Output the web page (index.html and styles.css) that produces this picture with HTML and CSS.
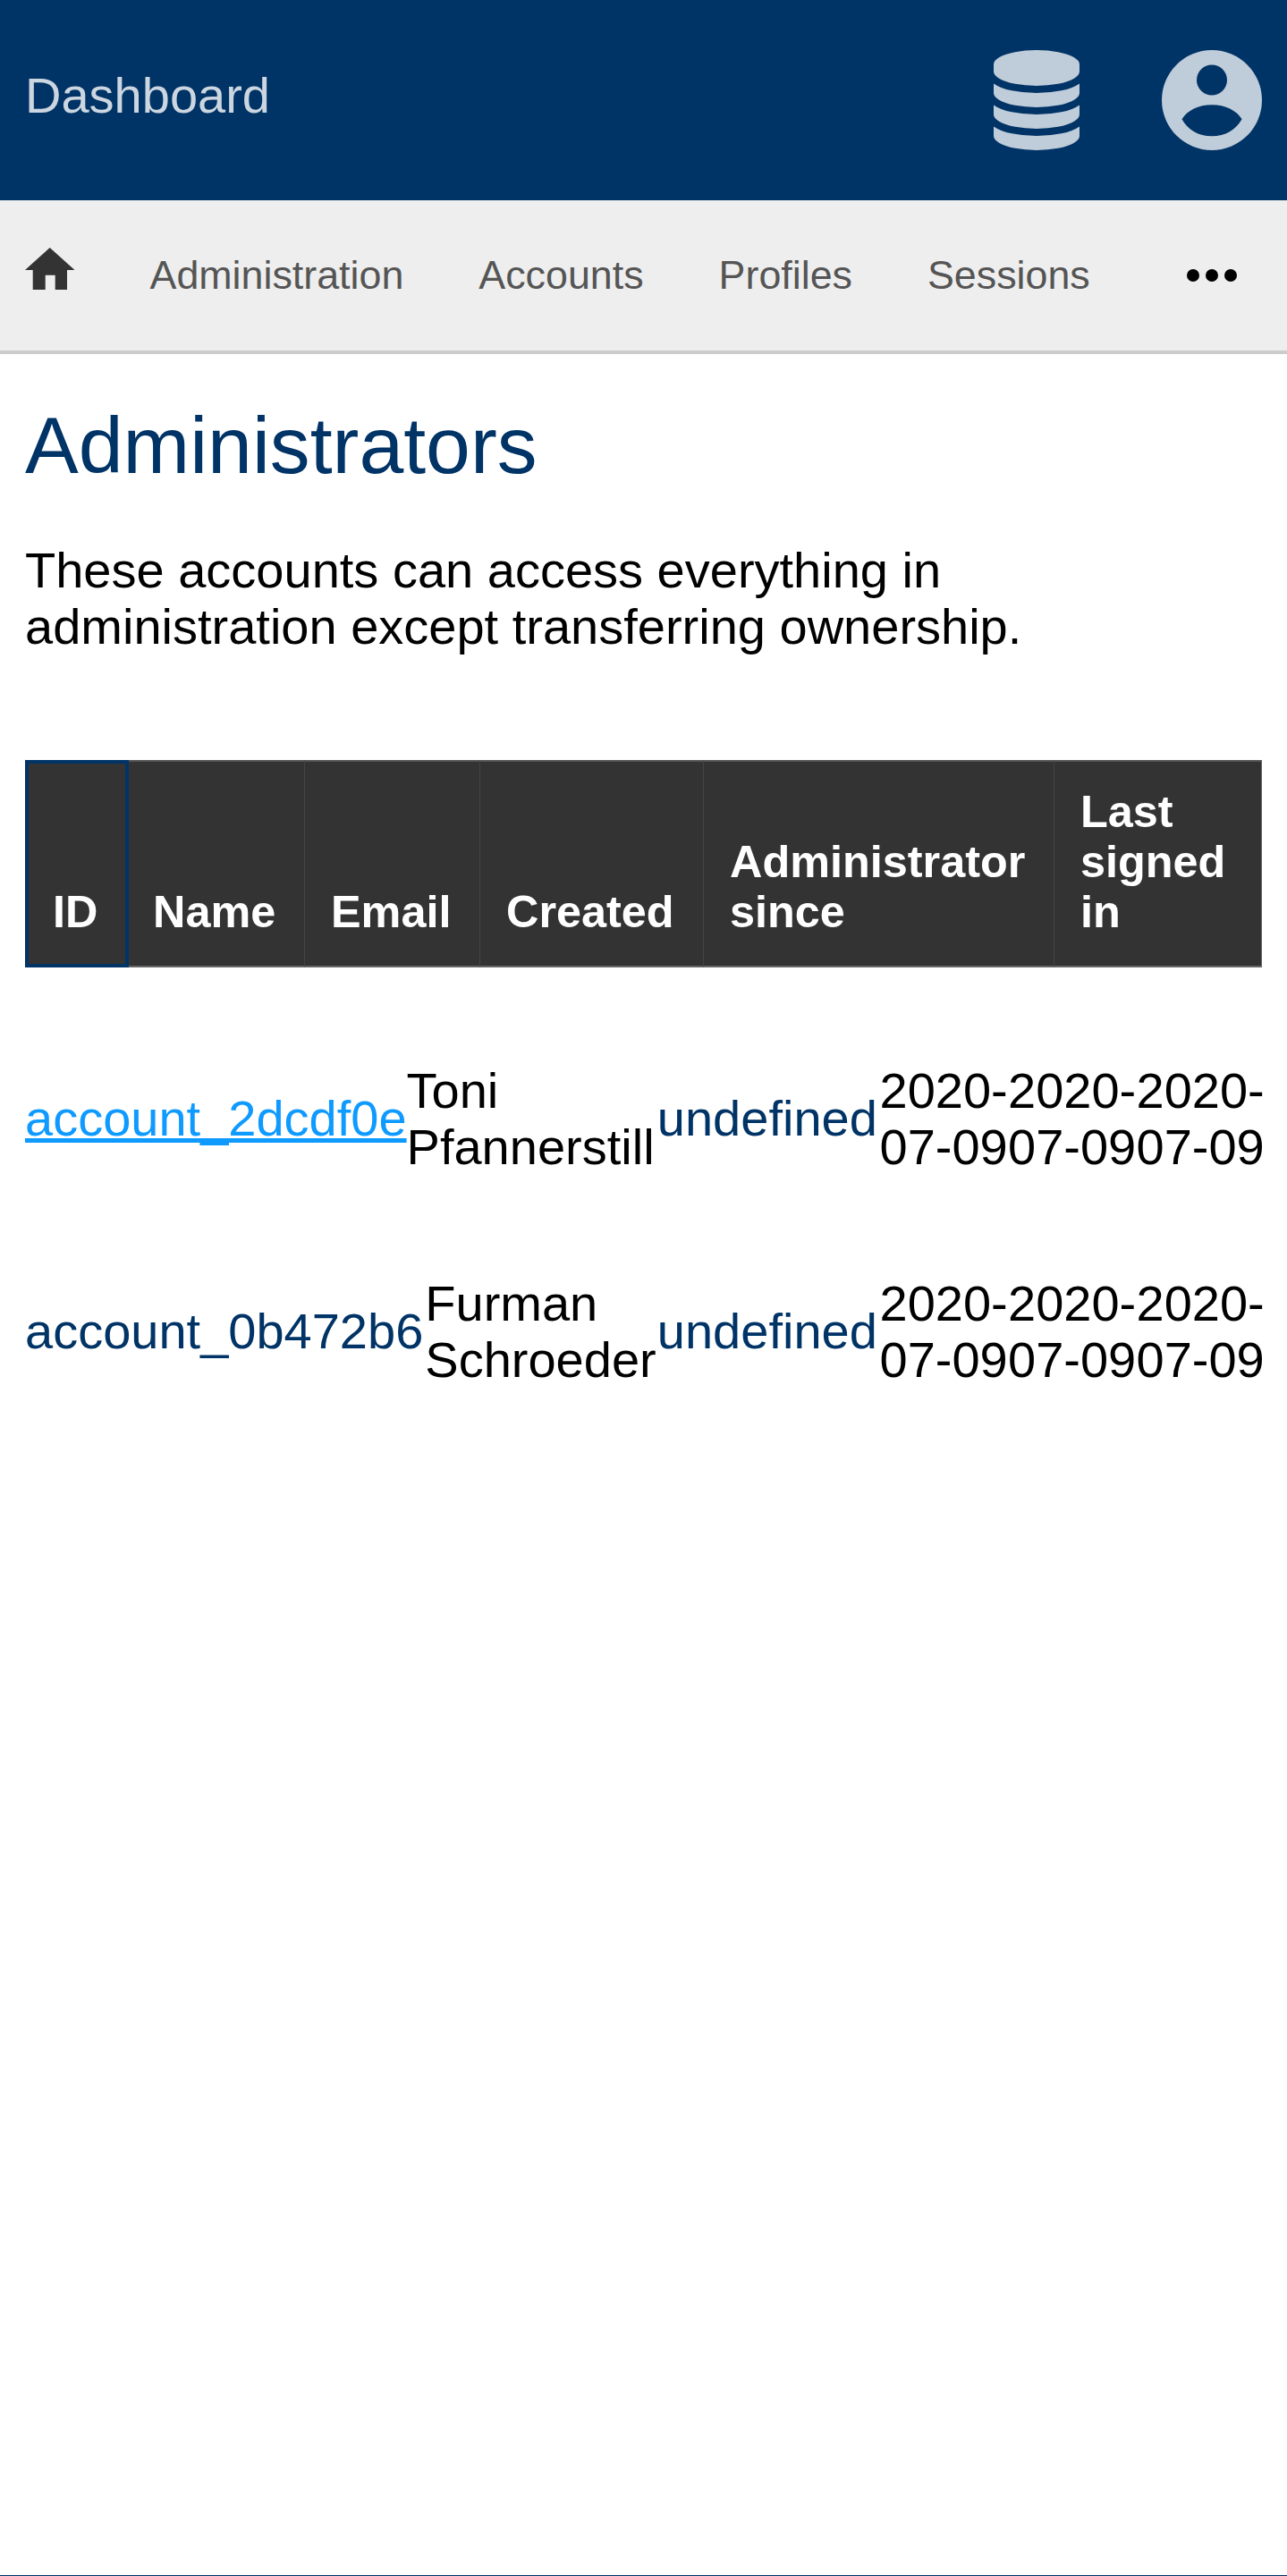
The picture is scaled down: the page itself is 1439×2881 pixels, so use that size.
FILE: index.html
```html
<!DOCTYPE html>
<html lang="en">
<head>
<meta charset="utf-8">
<title>Administrators</title>
<link rel="stylesheet" href="styles.css">
</head>
<body>
<header class="topbar">
  <a class="brand" href="#">Dashboard</a>
  <div class="topicons">
    <svg class="icon-db" viewBox="0 0 1536 1792" aria-hidden="true"><path d="M768 768q237 0 443-43t325-127v170q0 69-103 128t-280 93.5-385 34.5-385-34.5-280-93.5-103-128v-170q119 84 325 127t443 43zm0 768q237 0 443-43t325-127v170q0 69-103 128t-280 93.5-385 34.5-385-34.5-280-93.5-103-128v-170q119 84 325 127t443 43zm0-384q237 0 443-43t325-127v170q0 69-103 128t-280 93.5-385 34.5-385-34.5-280-93.5-103-128v-170q119 84 325 127t443 43zm0-1152q208 0 385 34.5t280 93.5 103 128v128q0 69-103 128t-280 93.5-385 34.5-385-34.5-280-93.5-103-128v-128q0-69 103-128t280-93.5 385-34.5z"/></svg>
    <svg class="icon-user" viewBox="0 0 112 112" aria-hidden="true"><path fill-rule="evenodd" d="M56 0a56 56 0 1 1 0 112a56 56 0 1 1 0-112zM56 16.500a17 17 0 1 0 0 34a17 17 0 1 0 0-34zM56 61.300C41 61.300 28.500 67.500 22.500 77.300C29 89.500 41 96.300 56 96.300S83 89.500 89.500 77.300C83.500 67.500 71 61.300 56 61.300z"/></svg>
  </div>
</header>
<nav class="navbar">
  <a class="nav-home" href="#"><svg class="icon-home" viewBox="0 0 55.500 47" aria-hidden="true"><path d="M27.700 0L55.500 25H47V47H33.700V30.700H22.700V47H8.700V25H0z"/></svg></a>
  <a class="nav-link" href="#">Administration</a>
  <a class="nav-link" href="#">Accounts</a>
  <a class="nav-link" href="#">Profiles</a>
  <a class="nav-link" href="#">Sessions</a>
  <a class="nav-more" href="#"><svg class="icon-more" viewBox="0 0 56 14" aria-hidden="true"><ellipse cx="7" cy="7" rx="7" ry="7"/><ellipse cx="28" cy="7" rx="7" ry="7"/><ellipse cx="49" cy="7" rx="7" ry="7"/></svg></a>
</nav>
<main class="content">
  <h1 class="title">Administrators</h1>
  <p class="intro">These accounts can access everything in administration except transferring ownership.</p>
  <div class="table-head">
    <div class="th th-id">ID</div>
    <div class="th th-name">Name</div>
    <div class="th th-email">Email</div>
    <div class="th th-created">Created</div>
    <div class="th th-since">Administrator since</div>
    <div class="th th-last">Last signed in</div>
  </div>
  <div class="row">
    <a class="account hot" href="#">account_2dcdf0e</a>
    <div class="name">Toni Pfannerstill</div>
    <a class="since" href="#">undefined</a>
    <div class="date">2020-07-09</div>
    <div class="date">2020-07-09</div>
    <div class="date">2020-07-09</div>
  </div>
  <div class="row">
    <a class="account" href="#">account_0b472b6</a>
    <div class="name name-gap">Furman Schroeder</div>
    <a class="since" href="#">undefined</a>
    <div class="date">2020-07-09</div>
    <div class="date">2020-07-09</div>
    <div class="date">2020-07-09</div>
  </div>
</main>
<div class="pagefoot"></div>
</body>
</html>
```
FILE: styles.css
```css
* { box-sizing: border-box; }
html, body { margin: 0; height: 100%; }
body { font-family: "Liberation Sans", Arial, sans-serif; font-size: 56px; line-height: 1.125; color: #000; background: #fff; min-height: 2881px; display: flex; flex-direction: column; }
a { text-decoration: none; }
.topbar { height: 224px; background: #003366; display: flex; align-items: center; justify-content: space-between; padding: 0 28.500px 0 28px; }
.brand { font-size: 56px; color: #ccd6e0; margin-bottom: 11px; }
.topicons { display: flex; align-items: center; gap: 92px; }
.icon-db { width: 96px; height: 112px; fill: #bfccd9; display: block; }
.icon-user { width: 112px; height: 112px; fill: #bfccd9; display: block; }
.navbar { height: 172px; background: #eee; border-bottom: 4px solid #ccc; display: flex; align-items: center; padding: 0 56px 0 28px; }
.nav-home { display: block; width: 55.500px; margin-right: 84px; margin-top: -15px; }
.icon-home { display: block; width: 55.500px; height: 47px; fill: #333; }
.nav-link { font-size: 44.800px; color: #555; margin-right: 84px; margin-bottom: 2px; }
.nav-more { margin-left: auto; }
.icon-more { display: block; width: 56px; height: 14px; fill: #000; }
.content { flex: 1; padding: 0 28px; }
.title { font-size: 89.600px; font-weight: 400; color: #003366; margin: 52px 0 0; line-height: 1.125; }
.intro { margin: 57px 0 0; width: 1200px; }
.table-head { display: flex; margin: 118px 0 0; background: #333; height: 232px; }
.th { padding: 28px 8px 32px 29px; color: #fff; font-weight: 700; font-size: 50.400px; line-height: 56px; display: flex; align-items: flex-end; border-left: 1px solid #444; border-top: 2px solid #555; border-bottom: 2px solid #666; }
.th-id { width: 116px; border: 4px solid #003366; padding: 28px 4px 30px 27px; }
.th-name { width: 196px; padding-left: 27px; border-left: 0; }
.th-email { width: 196px; }
.th-created { width: 250px; }
.th-since { width: 392px; }
.th-last { width: 233px; border-right: 1px solid #666; }
.row { display: flex; align-items: center; margin-top: 112px; margin-right: -3px; }
.table-head + .row { margin-top: 106px; }
.account { color: #003366; flex: none; }
.hot { color: #0f9aff; text-decoration: underline; }
.name { flex: 1; min-width: 0; }
.name-gap { padding-left: 2px; }
.since { flex: 0 0 248.700px; color: #003366; }
.date { flex: 0 0 143.500px; }
.pagefoot { height: 1px; background: #003366; }
```
